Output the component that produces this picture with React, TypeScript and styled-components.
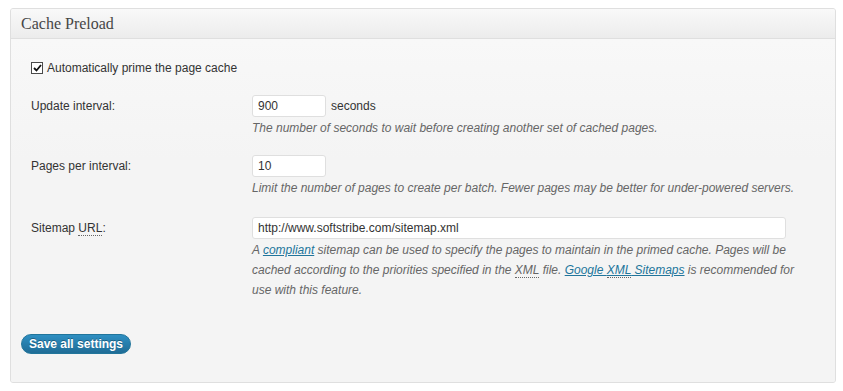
import React from 'react';
import styled, { createGlobalStyle } from 'styled-components';

const Global = createGlobalStyle`
  body {
    margin: 0;
    background: #fff;
    font-family: "Liberation Sans", Arial, sans-serif;
    font-size: 12px;
    color: #333;
  }
`;

const Panel = styled.div`
  margin: 8px 7px 7px 10px;
  border: 1px solid #dfdfdf;
  border-radius: 3px;
  background: #f5f5f5;
  overflow: hidden;
`;

const Header = styled.h3`
  margin: 0;
  height: 29px;
  padding-left: 10px;
  display: flex;
  align-items: center;
  border-bottom: 1px solid #dfdfdf;
  background: linear-gradient(#f9f9f9, #ececec);
  font-family: "Liberation Serif", "Times New Roman", serif;
  font-weight: normal;
  font-size: 16px;
  color: #464646;
`;

const Body = styled.div`
  padding: 20px 10px 28px 10px;
  background: linear-gradient(#f8f8f8, #f4f4f4 120px);
`;

const Settings = styled.div`
  padding-left: 10px;
`;

const CheckRow = styled.label`
  display: flex;
  align-items: center;
  gap: 4px;
  height: 18px;
  margin-bottom: 18px;
`;

const CheckBox = styled.span`
  box-sizing: border-box;
  width: 12px;
  height: 12px;
  border: 1px solid #4a4a4a;
  background: #fff;
  display: flex;
  align-items: center;
  justify-content: center;
  svg {
    display: block;
  }
`;

const Row = styled.div<{ $gap?: number }>`
  display: grid;
  grid-template-columns: 221px 1fr;
  margin-bottom: ${p => p.$gap ?? 17}px;
`;

const Label = styled.div`
  line-height: 22px;
  color: #333;
  abbr {
    text-decoration: none;
    border-bottom: 1px dotted #666;
  }
`;

const Field = styled.div`
  display: flex;
  flex-direction: column;
`;

const InputLine = styled.div`
  display: flex;
  align-items: center;
  gap: 5px;
`;

const Input = styled.input<{ $w: number }>`
  box-sizing: border-box;
  width: ${p => p.$w}px;
  height: 22px;
  margin: 0;
  padding: 0 5px;
  border: 1px solid #dfdfdf;
  border-radius: 3px;
  background: #fff;
  font-family: "Liberation Sans", Arial, sans-serif;
  font-size: 12px;
  color: #333;
  outline: none;
`;

const Desc = styled.p`
  margin: 0;
  padding-top: 1px;
  font-style: italic;
  line-height: 20px;
  color: #666;
  max-width: 560px;
  a {
    color: #21759b;
    text-decoration: underline;
  }
  abbr {
    text-decoration: none;
    border-bottom: 1px dotted #666;
  }
`;

const SaveButton = styled.button`
  margin-top: 17px;
  height: 20px;
  padding: 0 7px;
  border: 1px solid #21759b;
  border-radius: 11px;
  background: linear-gradient(#2e8fc2, #1f6c96);
  color: #fff;
  font-family: "Liberation Sans", Arial, sans-serif;
  font-weight: bold;
  font-size: 12px;
  text-shadow: 0 -1px 0 rgba(0, 0, 0, 0.3);
  cursor: pointer;
`;

export default function App() {
  return (
    <>
      <Global />
      <Panel>
        <Header>Cache Preload</Header>
        <Body>
          <Settings>
            <CheckRow>
              <CheckBox>
                <svg width="9" height="8" viewBox="0 0 9 8">
                  <path d="M1 4 L3.5 6.5 L8 1" fill="none" stroke="#111" strokeWidth="1.8" />
                </svg>
              </CheckBox>
              Automatically prime the page cache
            </CheckRow>
            <Row>
              <Label>Update interval:</Label>
              <Field>
                <InputLine>
                  <Input $w={74} defaultValue="900" />
                  <span>seconds</span>
                </InputLine>
                <Desc>The number of seconds to wait before creating another set of cached pages.</Desc>
              </Field>
            </Row>
            <Row $gap={19}>
              <Label>Pages per interval:</Label>
              <Field>
                <InputLine>
                  <Input $w={74} defaultValue="10" />
                </InputLine>
                <Desc>Limit the number of pages to create per batch. Fewer pages may be better for under-powered servers.</Desc>
              </Field>
            </Row>
            <Row>
              <Label>
                Sitemap <abbr title="Uniform Resource Locator">URL</abbr>:
              </Label>
              <Field>
                <InputLine>
                  <Input $w={534} defaultValue="http://www.softstribe.com/sitemap.xml" />
                </InputLine>
                <Desc>
                  A <a href="#">compliant</a> sitemap can be used to specify the pages to maintain in the primed cache. Pages will be
                  cached according to the priorities specified in the <abbr title="Extensible Markup Language">XML</abbr> file.{' '}
                  <a href="#">
                    Google <abbr title="Extensible Markup Language">XML</abbr> Sitemaps
                  </a>{' '}
                  is recommended for use with this feature.
                </Desc>
              </Field>
            </Row>
          </Settings>
          <SaveButton>Save all settings</SaveButton>
        </Body>
      </Panel>
    </>
  );
}
